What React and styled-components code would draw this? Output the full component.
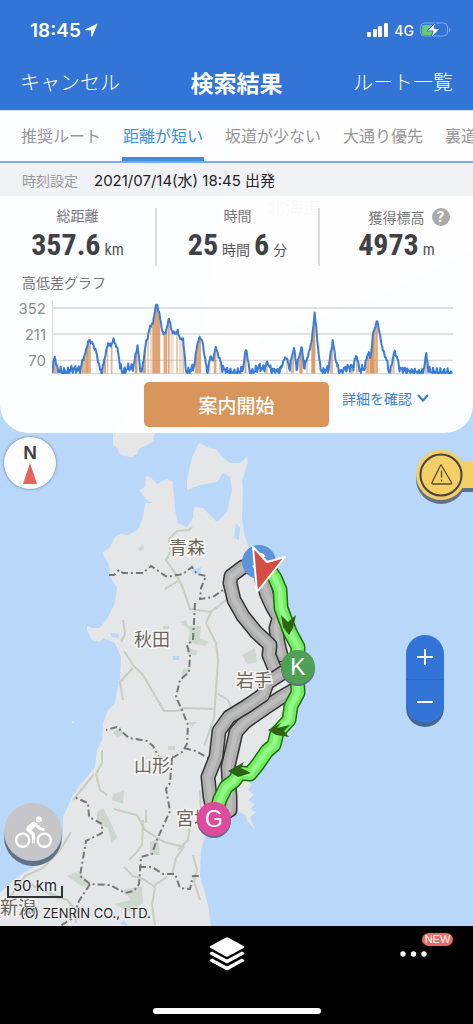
import React from 'react';
import styled, { createGlobalStyle } from 'styled-components';
import { MdDirectionsBike } from 'react-icons/md';

const blue = '#3375d6';
const ja = '"Noto Sans CJK JP", sans-serif';
const latin = 'Inter, "Noto Sans CJK JP", sans-serif';
const narrow = '"Liberation Sans Narrow", "Roboto Condensed", "Noto Sans CJK JP", sans-serif';

const GlobalStyle = createGlobalStyle`
  * { box-sizing: border-box; }
  body { margin: 0; background: #000; font-family: ${ja}; }
  button { border: 0; padding: 0; background: none; color: inherit; font: inherit; cursor: pointer; }
  svg { display: block; }
`;

const Screen = styled.div`
  display: flex;
  flex-direction: column;
  min-height: 100vh;
  overflow: hidden;
`;

const Header = styled.header`
  background: ${blue};
  color: #fff;
`;

const StatusBar = styled.div`
  display: flex;
  align-items: center;
  justify-content: space-between;
  height: 60px;
  padding: 0 22px 0 30px;
  font-family: ${latin};
`;

const StatusGroup = styled.div`
  display: flex;
  align-items: center;
  gap: ${(p) => p.$gap}px;
`;

const Clock = styled.span`
  font-size: 19px;
  font-weight: 600;
`;

const Network = styled.span`
  font-size: 14px;
  font-weight: 500;
`;

const TitleBar = styled.div`
  display: grid;
  grid-template-columns: 1fr auto 1fr;
  align-items: center;
  height: 50px;
  padding: 0 20px 6px;
`;

const Title = styled.h1`
  margin: 0;
  font-size: 23px;
  line-height: 32px;
  font-weight: 700;
`;

const HeaderButton = styled.button`
  justify-self: ${(p) => p.$side};
  font-size: 20px;
  line-height: 28px;
  font-weight: 300;
`;

const MapArea = styled.main`
  position: relative;
  display: flex;
  flex-direction: column;
  flex: 1;
  background: #b8d7f9;
`;

const MapCanvas = styled.svg`
  position: absolute;
  inset: 0;
  width: 100%;
  height: 100%;
`;

const Panel = styled.section`
  position: relative;
  overflow: hidden;
  border-top: 1px solid #cfe0f7;
  border-radius: 0 0 28px 28px;
  background: rgba(254, 254, 255, 0.97);
`;

const Tabs = styled.nav`
  display: flex;
  gap: 20px;
  height: 52px;
  padding-left: 20px;
  overflow: hidden;
  border-bottom: 2px solid #79a8f4;
`;

const Tab = styled.button`
  flex: none;
  padding: 2px 1px 0;
  border-bottom: 4px solid ${(p) => (p.$active ? '#3e8ee0' : 'transparent')};
  color: ${(p) => (p.$active ? '#3e8ee0' : '#979797')};
  font-size: 16px;
`;

const TimeRow = styled.div`
  display: flex;
  align-items: center;
  gap: 16px;
  height: 33px;
  padding: 0 22px;
  background: #f1f2f6;
  color: #222;
  font-family: ${latin};
  font-size: 15px;
`;

const TimeLabel = styled.span`
  color: #999;
  font-size: 14px;
`;

const Stats = styled.div`
  display: grid;
  grid-template-columns: 155fr 163fr 155fr;
  padding-top: 12px;
`;

const Stat = styled.div`
  height: 58px;
  color: #404045;
  text-align: center;

  & + & { border-left: 2px solid #dcdcde; }
`;

const StatLabel = styled.div`
  display: grid;
  grid-template-columns: 1fr auto 1fr;
  align-items: center;
  height: 14px;
  color: #777;
  font-size: 14px;
  line-height: 14px;
`;

const Help = styled.button`
  grid-column: 3;
  width: 18px;
  height: 18px;
  margin-left: 7px;
  border-radius: 50%;
  background: #aaa;
  color: #fff;
  font-family: ${latin};
  font-size: 14px;
  line-height: 18px;
  font-weight: 700;
`;

const StatText = styled.span`
  grid-column: 2;
`;

const StatValue = styled.div`
  display: flex;
  align-items: baseline;
  justify-content: center;
  gap: 4px;
  font-family: ${narrow};
  font-size: 30px;
  line-height: 46px;
  font-weight: 700;
  white-space: nowrap;
`;

const Unit = styled.span`
  color: #55555a;
  font-size: ${(p) => (p.$kanji ? 14 : 16)}px;
  font-weight: 400;
`;

const GraphTitle = styled.h2`
  margin: 8px 22px 10px;
  color: #777;
  font-size: 14px;
  line-height: 16px;
  font-weight: 400;
`;

const Graph = styled.div`
  display: grid;
  grid-template-columns: 28px 1fr;
  gap: 6px;
  padding: 0 20px 0 18px;
`;

const Scale = styled.div`
  height: 74px;
  margin-top: -4px;
  color: #8d8d92;
  font-family: ${latin};
  font-size: 15px;
  line-height: 26px;
  text-align: right;
`;

const Chart = styled.svg`
  width: 100%;
  height: 75px;
`;

const Actions = styled.div`
  display: grid;
  grid-template-columns: minmax(0, 1fr) 185px minmax(0, 1fr);
  padding: 7px 0 6px;
`;

const StartButton = styled.button`
  grid-column: 2;
  height: 45px;
  border-radius: 5px;
  background: #d9965c;
  color: #fff;
  font-size: 19px;
  font-weight: 500;
`;

const DetailButton = styled.button`
  display: flex;
  align-items: center;
  gap: 5px;
  height: 32px;
  padding-left: 13px;
  color: #3b7fd9;
  font-size: 14px;
  white-space: nowrap;
`;

const Controls = styled.div`
  position: relative;
  display: flex;
  justify-content: space-between;
  flex: 1;
  min-height: 440px;
`;

const LeftControls = styled.div`
  display: flex;
  flex-direction: column;
  justify-content: space-between;
  padding: 4px 0 4px 4px;
`;

const RightControls = styled.div`
  display: flex;
  flex-direction: column;
  align-items: flex-end;
  justify-content: space-between;
  padding: 16px 0 203px;
`;

const Compass = styled.button`
  display: flex;
  flex-direction: column;
  align-items: center;
  width: 52px;
  height: 52px;
  padding-top: 5px;
  border-radius: 50%;
  background: #fdfdfe;
  box-shadow: 0 0 3px #55789f;
  color: #444;
  font-family: "Liberation Sans", sans-serif;
  font-size: 19px;
  line-height: 21px;
  font-weight: 700;
`;

const ModeButton = styled.button`
  display: grid;
  place-items: center;
  width: 58px;
  height: 58px;
  border-radius: 50%;
  background: #c5c5ca;
  box-shadow: 0 5px 0 #5f7287;
  color: #fff;
`;

const MapScale = styled.div`
  width: 56px;
  height: 22px;
  margin: 15px 0 0 3px;
  font-family: ${latin};
  font-size: 15px;
  line-height: 20px;
  text-align: center;
  color: #222;
  background:
    linear-gradient(#333, #333) left bottom / 2px 12px no-repeat,
    linear-gradient(#333, #333) right bottom / 2px 12px no-repeat,
    linear-gradient(#333, #333) left bottom / 100% 2px no-repeat;
  text-shadow: 0 0 2px #fff, 0 0 2px #fff;
`;

const Copyright = styled.div`
  padding: 6px 0 0 16px;
  color: #222;
  font-family: ${latin};
  font-size: 13px;
  line-height: 18px;
  text-shadow: 0 0 2px #fff, 0 0 2px #fff;
`;

const ZoomControl = styled.div`
  width: 38px;
  margin-right: 29px;
  border-radius: 19px;
  background: ${blue};
  box-shadow: 0 4px 0 #4a6590;
`;

const ZoomButton = styled.button`
  display: grid;
  place-items: center;
  width: 38px;
  height: 44px;

  & + & { border-top: 1px solid #2c68c4; }
`;

const BottomBar = styled.footer`
  height: 98px;
  background: #000;
  color: #fff;
`;

const BottomActions = styled.div`
  display: grid;
  grid-template-columns: 1fr auto 1fr;
  align-items: center;
  height: 56px;
  padding-right: 20px;
`;

const MoreButton = styled.button`
  position: relative;
  justify-self: end;
  width: 53px;
  height: 40px;
`;

const Badge = styled.span`
  position: absolute;
  top: -1px;
  right: 0;
  width: 31px;
  height: 13px;
  border-radius: 7px;
  background: #ec6a66;
  font-family: "Liberation Sans", sans-serif;
  font-size: 11px;
  line-height: 13px;
`;

const HomeIndicator = styled.div`
  width: 168px;
  height: 6px;
  margin: 26px auto 0;
  border-radius: 3px;
  background: #fff;
`;

/* Elevation profile: [position, height] pairs on a 1200 x 225 field. */
const profile = [
  [0, 220], [4, 190], [8, 168], [14, 200], [24, 208], [45, 212], [60, 202], [85, 205], [90, 185], [100, 160], [107, 128],
  [113, 120], [122, 132], [132, 155], [142, 200], [150, 212], [156, 180], [162, 155], [168, 130], [176, 138], [183, 118],
  [190, 132], [198, 155], [203, 195], [212, 212], [225, 200], [245, 195], [250, 165], [256, 137], [262, 190], [269, 215],
  [275, 170], [282, 125], [288, 105], [295, 75], [302, 72], [308, 30], [313, 12], [320, 35], [327, 75], [333, 105],
  [343, 90], [350, 52], [357, 90], [366, 100], [376, 95], [386, 120], [392, 115], [398, 180], [403, 215], [415, 205],
  [427, 190], [434, 135], [443, 110], [450, 125], [458, 175], [464, 213], [476, 165], [481, 188], [489, 140], [499, 170],
  [510, 200], [530, 212], [555, 214], [572, 200], [581, 143], [589, 202], [600, 214], [620, 195], [632, 203], [645, 185],
  [657, 207], [680, 210], [700, 170], [711, 200], [724, 144], [732, 200], [747, 140], [755, 200], [770, 155], [779, 110],
  [786, 37], [793, 110], [801, 190], [810, 212], [828, 200], [840, 122], [850, 185], [862, 213], [880, 200], [902, 195],
  [911, 165], [920, 205], [935, 200], [947, 155], [953, 175], [962, 95], [974, 62], [982, 110], [990, 150], [1003, 185],
  [1011, 215], [1018, 185], [1025, 153], [1033, 175], [1042, 203], [1070, 210], [1110, 215], [1120, 162], [1127, 208],
  [1160, 213], [1180, 211], [1199, 220],
];

const heightAt = (x) => {
  const i = Math.max(1, profile.findIndex((p) => p[0] >= x));
  const [x0, y0] = profile[i - 1];
  const [x1, y1] = profile[i];
  return y0 + ((y1 - y0) * (x - x0)) / (x1 - x0);
};

const samples = Array.from({ length: 600 }, (_, i) => {
  const x = i * 2;
  const y = heightAt(x);
  const wave = Math.sin(i * 2.3) + Math.sin(i * 5.1 + 1);
  const rough = y > 190 ? 7 : 3;
  const drop = y > 190 ? 5 : 0;
  return [x, Math.max(12, Math.min(219, y + drop + wave * rough))];
});

const profileLine = samples.map(([x, y]) => `${x},${y.toFixed(1)}`).join(' ');

/* Climbing stretches: [start, width, opacity]. */
const climbs = [
  [4, 10, 0.8], [50, 4, 0.5], [68, 4, 0.4], [88, 6, 0.8], [94, 22, 0.75], [104, 4, 0.7], [132, 6, 0.2], [154, 8, 0.8], [165, 3, 0.7],
  [176, 5, 0.7], [248, 8, 0.9], [272, 9, 0.85], [285, 5, 0.5], [294, 4, 0.5], [300, 24, 0.85], [334, 10, 0.8], [346, 6, 0.8],
  [354, 10, 0.3], [372, 4, 0.7], [380, 12, 0.3], [392, 3, 0.6], [428, 18, 0.8], [470, 4, 0.5], [484, 8, 0.8], [500, 6, 0.4],
  [576, 6, 0.8], [634, 12, 0.6], [655, 8, 0.5], [680, 5, 0.7], [700, 5, 0.4], [716, 8, 0.7], [740, 10, 0.9], [760, 6, 0.4],
  [776, 12, 0.9], [815, 5, 0.6], [822, 4, 0.6], [832, 9, 0.7], [880, 3, 0.6], [895, 9, 0.5], [910, 5, 0.6], [939, 10, 0.7],
  [950, 16, 0.95], [967, 8, 0.8], [1012, 3, 0.8], [1018, 8, 0.5], [1115, 8, 0.6],
];

const ElevationChart = () => (
  <Chart viewBox="0 0 1200 225" preserveAspectRatio="none" role="img" aria-label="高低差グラフ">
    <defs>
      <clipPath id="under-profile">
        <polygon points={`0,221 ${profileLine} 1200,221`} />
      </clipPath>
    </defs>
    <path d="M0 24H1200M0 102H1200M0 181H1200M0 221H1200M1 2V222" stroke="#d8d9dc" strokeWidth="4" fill="none" />
    <g clipPath="url(#under-profile)">
      {climbs.map(([x, w, o]) => (
        <rect key={x} x={x} y="0" width={w} height="221" fill="#d9935a" opacity={o} />
      ))}
    </g>
    <polyline points={profileLine} fill="none" stroke="#3a7dd8" strokeWidth="6" strokeLinejoin="round" />
  </Chart>
);

const greyRoutes = [
  'M262 580 267 595 272 606 279 618 276 628 278 643 281 655',
  'M294 690 280 698 265 708 245 722 236 732 232 750 228 767 230 797 230 810 222 815',
  'M258 563 243 567 231 576 230 583 234 600 243 616 256 632 270 645 269 655 275 670 284 672',
  'M284 672 267 683 263 695 247 706 229 717 219 731 216 757 208 777 210 797 214 815',
];
const greenRoute = 'M268 568 275 578 280 590 281 608 290 632 298 647 297 667 298 693 291 706 289 720 277 733 274 745 267 751 258 764 250 774 240 773 234 781 226 787 220 799 216 812';

const Route = ({ d, edge, fill, core }) => (
  <g fill="none" strokeLinejoin="round" strokeLinecap="round">
    <path d={d} stroke={edge} strokeWidth="15" />
    <path d={d} stroke={fill} strokeWidth="12" />
    <path d={d} stroke={core} strokeWidth="5" />
  </g>
);

const Place = ({ x, y, children }) => (
  <text x={x} y={y} fontFamily='"Noto Sans CJK JP", sans-serif' fontSize="18" fill="#6b655c" stroke="#f6f6f4" strokeWidth="3" paintOrder="stroke">
    {children}
  </text>
);

const Pin = ({ x, y, color, letter }) => (
  <g>
    <circle cx={x} cy={y + 2} r="17" fill="#5f6f86" />
    <circle cx={x} cy={y} r="17" fill={color} />
    <text x={x} y={y + 8} fontFamily='"Liberation Sans", sans-serif' fontSize="23" fill="#fff" textAnchor="middle">
      {letter}
    </text>
  </g>
);

const RouteMap = () => (
  <MapCanvas viewBox="0 110 473 816" preserveAspectRatio="xMidYMin slice" role="img" aria-label="ルート地図">
    <g fill="#e4e6e8">
      <path d="M113 430V445L117 447 119 453 125 456 132 457 137 454 139 449 147 445 153 441 155 430 150 400 175 370 230 410 260 340 370 300 473 250V110H240L200 330Z" />
      <path d="M199 443 207 447 217 450 222 457 230 463 240 463 247 457 248 462 245 472 242 480 243 493 242 517 244 533 248 545 262 570 275 590 285 615 292 640 302 655 302 690 298 712 295 727 285 737 280 742 275 753 267 762 258 772 247 780 252 785 248 790 254 795 248 800 255 804 250 809 256 812 250 817 255 830 248 822 245 815 235 810 220 823 205 837 201 850 200 877 205 893 209 910 211 926H0V893L10 883 25 872 43 863 52 850 63 837 63 817 72 797 78 787 87 777 95 767 97 750 102 740 103 723 108 710 115 703 117 690 120 678 121 657 115 643 103 638 100 642 92 640 87 630 87 626 92 628 100 628 108 617 115 603 117 587 110 577 109 565 102 553 110 547 115 537 121 534 128 535 138 530 143 517 145 503 153 503 147 500 139 490 145 487 146 476 150 477 157 484 167 479 173 482 175 510 178 523 187 527 193 518 194 507 203 508 217 522 227 512 232 490 230 477 223 473 217 482 200 485 187 490 187 480 192 457Z" />
      <circle cx="55" cy="446" r="1" />
      <circle cx="73" cy="722" r="1" />
    </g>
    <g fill="#b8d7f9">
      <path d="M236 523 240 528 239 540 234 538Z" />
      <path d="M192 570 201 567 200 573 194 575Z" />
      <path d="M110 633 119 634 118 638 112 637Z" />
      <path d="M173 656H179V660H173Z" />
      <path d="M120 924 124 920 128 926Z" />
    </g>
    <g fill="#ccd8cd">
      <path d="M138 548 143 545 144 549 140 551Z" />
      <path d="M180 622 186 620 188 626 201 626 200 638 209 642 205 646 195 644 188 640 190 630Z" />
      <path d="M188 648 198 651 196 655 187 654Z" />
      <path d="M163 626H169V629H163ZM183 669 189 668 187 675 182 677Z" />
      <path d="M113 732 121 727 123 735 117 737ZM189 722 197 722 191 728ZM168 746H175V750H168Z" />
      <path d="M242 655 255 648 257 662 247 664Z" />
      <path d="M113 794 124 791 123 804 112 800ZM97 812 103 808 110 821 117 837 112 844 108 828 97 824Z" />
      <path d="M150 842 158 838 160 855 150 855ZM67 876 78 871 90 884 83 887ZM122 890 142 886 143 903 130 912 114 904 131 900Z" />
    </g>
    <g fill="none" stroke="#c6cdc1" strokeWidth="2" strokeLinejoin="round">
      <path d="M192 527 189 530 177 531 169 539 169 545 171 551 166 560 173 570 177 576 183 588 190 609 211 612 206 623 216 643 218 660 216 690 214 718 204 746" />
      <path d="M123 620 125 634 121 642M124 651 133 665 143 675 154 694 164 711 178 711 184 708 213 709M133 668 120 682 123 700M165 589 178 581M211 612 226 600M218 694 228 700 232 710" />
      <path d="M102 750V763L96 774 100 790 107 795M73 800 94 774M114 809 124 812 137 815 145 830 164 842 184 847 176 858 172 875M146 810V823M143 820 142 845 135 854 129 860M200 790 201 812M190 825 188 840 178 850" />
      <path d="M71 832 60 850 43 868 25 876 10 897M124 867 133 876 143 879 155 887 152 905 155 925M193 855 197 870 194 882 200 900M155 885 167 877M50 893 67 900 75 909 76 923M30 884 60 899" />
    </g>
    <g fill="none" stroke="#777" strokeWidth="2" strokeDasharray="7 3 2 3">
      <path d="M109 575 114 575 119 570 123 573 143 573 151 566 167 577 183 574 192 567 197 574 206 576 201 588 200 599 213 597 226 588" />
      <path d="M195 603 193 640 187 645 190 656 189 672 180 680 176 697 182 710 188 725 187 744 182 752 174 757 159 757 153 746 147 741 129 738 117 727 106 730" />
      <path d="M184 748 196 751 210 759M172 758 170 783 166 789 170 811 156 842 152 854 141 857 139 884 134 891 125 893 110 885 90 884 80 876 86 841 102 833 102 824 89 817 88 803 74 797" />
      <path d="M139 867 152 867 163 874 175 874 180 888 190 889 193 876 200 876M90 884 79 901 73 918 60 926" />
    </g>
    <Place x="267" y="214">北海道</Place>
    <Place x="169" y="554">青森</Place>
    <Place x="134" y="646">秋田</Place>
    <Place x="134" y="772">山形</Place>
    <Place x="176" y="825">宮城</Place>
    <Place x="0" y="914">新潟</Place>
    {greyRoutes.map((d) => (
      <Route key={d} d={d} edge="#333" fill="#aeaeae" core="#bdbdbd" />
    ))}
    <Place x="236" y="687">岩手</Place>
    <Route d={greenRoute} edge="#1f6b12" fill="#70ee60" core="#94f888" />
    <g fill="#2c6414">
      <path d="M281 615 288 622 296 615 293 628 289 635 283 627Z" />
      <path d="M268 730 281 723 277 728 290 725 284 731 289 737 276 735Z" />
      <path d="M228 771 244 762 241 768 251 773 238 777Z" />
    </g>
    <circle cx="259" cy="562" r="17" fill="#5b94d8" />
    <text x="259" y="570" fontFamily='"Liberation Sans", sans-serif' fontSize="23" fill="#fff" textAnchor="middle">S</text>
    <path d="M253 547 267 562 285 557 257 592Z" fill="#d34f45" stroke="#fff" strokeWidth="2" strokeLinejoin="round" />
    <Pin x={298} y={667} color="#4f9f55" letter="K" />
    <Pin x={214} y={819} color="#dc4b9c" letter="G" />
  </MapCanvas>
);

const StatusIcons = () => (
  <StatusGroup $gap={6}>
    <svg width="21" height="14" viewBox="0 0 21 14" fill="#fff">
      <rect y="9" width="4" height="5" rx="1" />
      <rect x="6" y="6" width="4" height="8" rx="1" />
      <rect x="11" y="3" width="4" height="11" rx="1" />
      <rect x="17" width="4" height="14" rx="1" />
    </svg>
    <Network>4G</Network>
    <svg width="31" height="16" viewBox="0 0 31 16">
      <rect x="0.5" y="1" width="27" height="13" rx="4" fill="none" stroke="#82abe7" />
      <rect x="2" y="3" width="11" height="10" rx="2" fill="#67cd68" />
      <path d="M29 5.500c2 1 2 4 0 5Z" fill="#82abe7" />
      <path d="M16 0 7 9H13L11 16 20 6.500H14Z" fill="#fff" stroke={blue} />
    </svg>
  </StatusGroup>
);

const tabs = ['推奨ルート', '距離が短い', '坂道が少ない', '大通り優先', '裏道優先'];

export default function App() {
  return (
    <Screen>
      <GlobalStyle />
      <Header>
        <StatusBar>
          <StatusGroup $gap={4}>
            <Clock>18:45</Clock>
            <svg width="13" height="14" viewBox="0 0 13 14" fill="#fff">
              <path d="M12.700 0.500 0.500 6.200C-0.200 6.600 0 7.300 0.700 7.300H6.200V13C6.200 13.900 7 14 7.300 13.300Z" />
            </svg>
          </StatusGroup>
          <StatusIcons />
        </StatusBar>
        <TitleBar>
          <HeaderButton $side="start">キャンセル</HeaderButton>
          <Title>検索結果</Title>
          <HeaderButton $side="end">ルート一覧</HeaderButton>
        </TitleBar>
      </Header>

      <MapArea>
        <RouteMap />
        <Panel>
          <Tabs>
            {tabs.map((name) => (
              <Tab key={name} $active={name === '距離が短い'}>{name}</Tab>
            ))}
          </Tabs>
          <TimeRow>
            <TimeLabel>時刻設定</TimeLabel>
            <span>2021/07/14(水) 18:45 出発</span>
          </TimeRow>
          <Stats>
            <Stat>
              <StatLabel><StatText>総距離</StatText></StatLabel>
              <StatValue>357.6<Unit>km</Unit></StatValue>
            </Stat>
            <Stat>
              <StatLabel><StatText>時間</StatText></StatLabel>
              <StatValue>25<Unit $kanji>時間</Unit> 6<Unit $kanji>分</Unit></StatValue>
            </Stat>
            <Stat>
              <StatLabel>
                <StatText>獲得標高</StatText>
                <Help aria-label="獲得標高について">?</Help>
              </StatLabel>
              <StatValue>4973<Unit>m</Unit></StatValue>
            </Stat>
          </Stats>
          <GraphTitle>高低差グラフ</GraphTitle>
          <Graph>
            <Scale>
              <div>352</div>
              <div>211</div>
              <div>70</div>
            </Scale>
            <ElevationChart />
          </Graph>
          <Actions>
            <StartButton>案内開始</StartButton>
            <DetailButton>
              詳細を確認
              <svg width="12" height="8" viewBox="0 0 12 8" fill="none" stroke="currentColor" strokeWidth="2.200">
                <path d="M1 1 6 6.500 11 1" />
              </svg>
            </DetailButton>
          </Actions>
        </Panel>

        <Controls>
          <LeftControls>
            <Compass aria-label="北を上にする">
              N
              <svg width="14" height="21" viewBox="0 0 14 21"><path d="M7 0 14 21H0Z" fill="#e8635e" /></svg>
            </Compass>
            <div>
              <ModeButton aria-label="自転車"><MdDirectionsBike size={37} /></ModeButton>
              <MapScale>50 km</MapScale>
              <Copyright>(C) ZENRIN CO., LTD.</Copyright>
            </div>
          </LeftControls>
          <RightControls>
            <button aria-label="注意情報">
              <svg width="57" height="56" viewBox="0 0 57 56">
                <path d="M25 30H57V43H25Z" fill="#5f7287" />
                <circle cx="25" cy="30" r="25" fill="#5f7287" />
                <circle cx="25" cy="26" r="25" fill="#f3cf65" />
                <path d="M25 13H57V39H25Z" fill="#f3cf65" />
                <circle cx="25" cy="26" r="20.500" fill="none" stroke="#444" strokeWidth="2" />
                <path d="M25.500 16.500 35.500 33.500Q36 35 34.500 35H17Q15.500 35 16 33.500L24.500 16.500Q25 15.500 25.500 16.500ZM25.500 21.500V28.500M25.500 30.500V32.500" fill="none" stroke="#5b502f" strokeWidth="1.300" />
              </svg>
            </button>
            <ZoomControl>
              <ZoomButton aria-label="拡大">
                <svg width="16" height="16" viewBox="0 0 16 16" stroke="#fff" strokeWidth="2"><path d="M0 8H16M8 0V16" /></svg>
              </ZoomButton>
              <ZoomButton aria-label="縮小">
                <svg width="16" height="16" viewBox="0 0 16 16" stroke="#fff" strokeWidth="2"><path d="M0 8H16" /></svg>
              </ZoomButton>
            </ZoomControl>
          </RightControls>
        </Controls>
      </MapArea>

      <BottomBar>
        <BottomActions>
          <span />
          <button aria-label="地図レイヤー">
            <svg width="36" height="34" viewBox="0 0 36 34" fill="#fff">
              <path d="M17 0.500Q18 0 19 0.500L35 9.300Q36 10 35 10.700L19 19.500Q18 20 17 19.500L1 10.700Q0 10 1 9.300Z" />
              <path d="M3 14.500 17 22Q18 22.500 19 22L33 14.500 35 15.700Q36 16.500 35 17.200L19 26Q18 26.500 17 26L1 17.200Q0 16.500 1 15.700Z" />
              <path d="M3 21.500 17 29Q18 29.500 19 29L33 21.500 35 22.700Q36 23.500 35 24.200L19 33Q18 33.500 17 33L1 24.200Q0 23.500 1 22.700Z" />
            </svg>
          </button>
          <MoreButton aria-label="その他">
            <svg width="28" height="40" viewBox="0 0 28 40" fill="#fff">
              <circle cx="3" cy="20" r="2.700" /><circle cx="13.500" cy="20" r="2.700" /><circle cx="24" cy="20" r="2.700" />
            </svg>
            <Badge>NEW</Badge>
          </MoreButton>
        </BottomActions>
        <HomeIndicator />
      </BottomBar>
    </Screen>
  );
}
